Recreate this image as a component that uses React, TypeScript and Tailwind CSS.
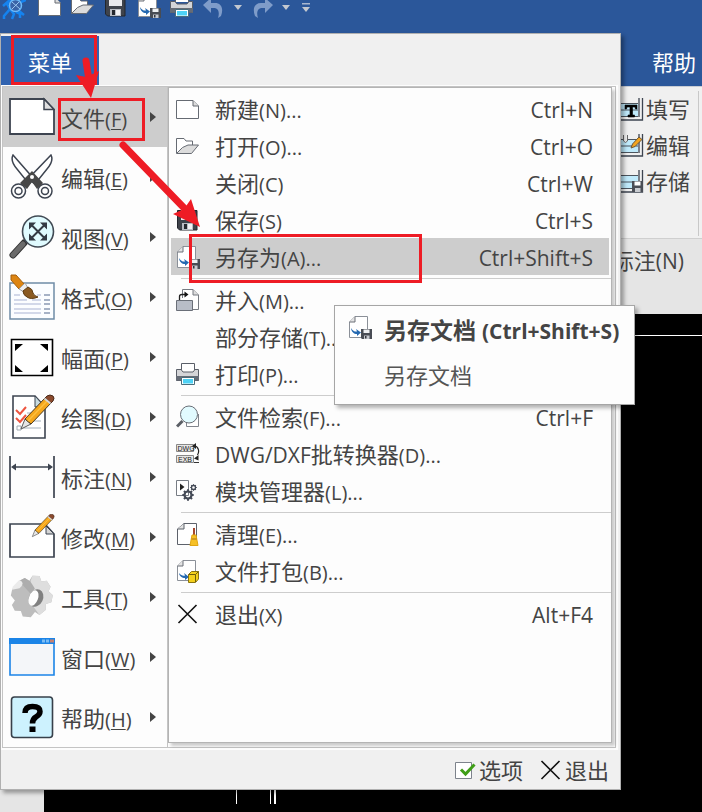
import React from "react";

type IconProps = { className?: string };
type Icon = (p: IconProps) => React.ReactElement;

const INK = "#3d4450";
const FONT = "font-['Open_Sans','Noto_Sans_CJK_SC',sans-serif]";

/* ---------- small icons (24 x 24) ---------- */

const Svg24 = ({ className = "size-6", children }: { className?: string; children: React.ReactNode }) => (
  <svg viewBox="0 0 24 24" className={`shrink-0 ${className}`} fill="none" aria-hidden="true">
    {children}
  </svg>
);

const NewIcon: Icon = (p) => (
  <Svg24 {...p}>
    <path d="M0.5 3.5H17L22.500 9V21.5H0.5Z" fill="#fff" stroke="#666b73" />
    <path d="M17 3.5V9H22.500" fill="#ddd" stroke="#666b73" />
  </Svg24>
);

const OpenIcon: Icon = (p) => (
  <Svg24 {...p}>
    <path d="M0.5 19V4.5H8L10 7H16.5V11" fill="#fff" stroke="#666b73" />
    <path d="M0.5 19.5L6.5 13.5L12 11H22.500L15.500 19.5Z" fill="#dcdcdc" stroke="#666b73" />
  </Svg24>
);

const SaveIcon: Icon = (p) => (
  <Svg24 {...p}>
    <path d="M1.500 2.500H21V22H3.500L1.500 20V2.500Z" fill="#3f434b" stroke="#22262d" />
    <path d="M5 2H18V12H5Z" fill="#e9e9ec" />
    <path d="M6 15H17V22H6Z" fill="#b9bcc3" />
    <path d="M8 16H11V21H8Z" fill="#25282e" />
    <path d="M12 16H16V21H12Z" fill="#f2f2f4" />
  </Svg24>
);

const SaveAsIcon: Icon = (p) => (
  <Svg24 {...p}>
    <path d="M7 1.500H19.500V22.500H1.500V7Z" fill="#fff" stroke="#8b9098" />
    <path d="M7 1.500V7H1.500" fill="#e3e3e3" stroke="#6c7078" />
    <path d="M3 13C5 16 7 17 9 16.500L8 14L13 17.500L9 21V19C6 19 3.500 17 3 13Z" fill="#2468b0" />
    <path d="M13 14H24V24H14L13 23Z" fill="#484c54" />
    <path d="M15.500 14.500H21.500V18H15.500Z" fill="#eef0f2" />
    <path d="M16 20.500H21.500V24H16Z" fill="#c6c9cf" />
    <path d="M17 21H18.500V23.500H17Z" fill="#33363c" />
  </Svg24>
);

const MergeIcon: Icon = (p) => (
  <Svg24 {...p}>
    <path d="M6.500 10V1.500H17L22.500 7V21.500H16" fill="#fff" stroke="#777b82" />
    <path d="M17 1.500V7H22.500" fill="#ddd" stroke="#777b82" />
    <path d="M0.500 12.500H16.500V22.500H0.500Z" fill="#b8bdc7" stroke="#6a6f78" />
    <path d="M3.500 12V8.500Q3.500 6.500 6 6.500H9" stroke="#222" strokeWidth="1.300" />
    <path d="M8.500 3.500L12.500 6.500L8.500 9.500Z" fill="#111" />
  </Svg24>
);

const PrintIcon: Icon = (p) => (
  <Svg24 {...p}>
    <path d="M5.500 8V1.500H18.500V8" fill="#fff" stroke="#5a5f68" />
    <path d="M0.500 7.500H5L7 10H17L19 7.500H22.500V18.500H0.500Z" fill="#d4d5d8" stroke="#5a5f68" />
    <path d="M0 14H23V18.500H0Z" fill="#666c76" />
    <path d="M5.500 15.500H18.500V22.500H5.500Z" fill="#fff" stroke="#4a6d7b" />
    <path d="M7 17H17V21.500H7Z" fill="#4ed2f5" />
  </Svg24>
);

const SearchDocIcon: Icon = (p) => (
  <Svg24 {...p}>
    <path d="M10.500 16V21.500H22.500V9" fill="#fff" stroke="#81858c" />
    <path d="M1 21.500L6.500 16" stroke="#5b5f66" strokeWidth="3" />
    <circle cx="13" cy="9.500" r="8.500" fill="#e2fbff" stroke="#6a6f77" />
  </Svg24>
);

const ConvertIcon: Icon = (p) => (
  <Svg24 {...p}>
    <path d="M0.500 2.500H17.500V9.500H0.500ZM0.500 13.500H17.500V20.500H0.500Z" fill="#e6e6e6" stroke="#888" />
    <text x="1.500" y="8.500" fontSize="7" fontFamily="Liberation Sans, sans-serif" fill="#222">DWG</text>
    <text x="2" y="19.500" fontSize="7" fontFamily="Liberation Sans, sans-serif" fill="#222">EXB</text>
    <path d="M18 3.500C22 4 24 9 21.500 13" stroke="#222" strokeWidth="1.200" />
    <path d="M16 4L20 1V7ZM18 16.500L22.500 13V18.500Z" fill="#222" />
    <path d="M18 20.500H23" stroke="#333" />
  </Svg24>
);

const Cog = ({ cx, cy, r, w }: { cx: number; cy: number; r: number; w: number }) => (
  <g stroke="#454b57" fill="none">
    <circle cx={cx} cy={cy} r={r} strokeWidth={w} />
    {[0, 45, 90, 135, 180, 225, 270, 315].map((a) => (
      <path key={a} d={`M${cx} ${cy - r}V${cy - r - w}`} strokeWidth={w * 0.9} transform={`rotate(${a} ${cx} ${cy})`} />
    ))}
  </g>
);

const ModulesIcon: Icon = (p) => (
  <Svg24 {...p}>
    <path d="M0.500 1.500H12.500V16.500H0.500Z" fill="#fff" stroke="#777c84" />
    <path d="M4 4.500L8.500 8L4 11.500Z" fill="#222" />
    <Cog cx={12} cy={16} r={3.5} w={2.2} />
    <Cog cx={17.500} cy={8.500} r={2} w={1.300} />
  </Svg24>
);

const CleanIcon: Icon = (p) => (
  <Svg24 {...p}>
    <path d="M8 1.500H20.500V22.500H1.500V7Z" fill="#fff" stroke="#5d626b" />
    <path d="M8 1.500V7H1.500" fill="#e3e3e3" stroke="#5d626b" />
    <path d="M18 6V14" stroke="#a5462d" strokeWidth="2" />
    <path d="M16 13H20L22 23.500H14Z" fill="#f6c026" stroke="#e0a512" />
    <path d="M15.500 17H20.500" stroke="#a8731b" />
  </Svg24>
);

const PackIcon: Icon = (p) => (
  <Svg24 {...p}>
    <path d="M7 1.500H19.500V21.500H1.500V7Z" fill="#fff" stroke="#8b9098" />
    <path d="M7 1.500V7H1.500" fill="#e3e3e3" stroke="#6c7078" />
    <path d="M3 14C5 16.500 7 17 9 16.500L8 14L13 18L9 21V19C6 19 3.500 17.500 3 14Z" fill="#2468b0" />
    <path d="M12.500 15.500L15.500 12.500H22.500V20L19.500 23.500H12.500Z" fill="#f4d01b" stroke="#8a7410" />
    <path d="M12.500 15.500H19.500L22.500 12.500M19.500 15.500V23" stroke="#6e5c0a" />
  </Svg24>
);

const CloseIcon: Icon = (p) => (
  <Svg24 {...p}>
    <path d="M2.500 3L20.500 21M20.500 3L2.500 21" stroke="#111" strokeWidth="1.600" />
  </Svg24>
);

const OptionsIcon: Icon = (p) => (
  <Svg24 {...p}>
    <path d="M2.500 4.500H18.500V20.500H2.500Z" fill="#fff" stroke="#7d838c" />
    <path d="M8 11.500L12.500 16L21.500 6.500" stroke="#3f9e17" strokeWidth="3" />
  </Svg24>
);

/* ---------- large icons (46 x 46) ---------- */

const Svg46 = ({ children }: { children: React.ReactNode }) => (
  <svg viewBox="0 0 46 46" className="size-[46px] shrink-0" fill="none" aria-hidden="true">
    {children}
  </svg>
);

const Pencil = () => (
  <g>
    <path d="M-1 1L3 -9L9 -4Z" fill="#e6e6e6" stroke="#5a5a5a" />
    <path d="M3 -9L23 -30L29 -25L9 -4Z" fill="#f6a71c" stroke="#4a3a22" />
    <path d="M6 -7L26 -28" stroke="#fdc03f" strokeWidth="1.500" />
    <path d="M25 -32Q28 -34 31 -32Q33 -30 31 -27L29 -25L23 -30Z" fill="#8b4a2d" stroke="#4a2a1a" />
    <path d="M22.500 -29.500L28.500 -24.500" stroke="#d5d5d5" strokeWidth="2" />
  </g>
);

const FileBig: Icon = () => (
  <Svg46>
    <path d="M1 5H35L45 15.500V40H1Z" fill="#fff" stroke={INK} strokeWidth="1.800" />
    <path d="M35 5V15.500H45Z" fill="#e0e0e0" stroke={INK} strokeWidth="1.500" />
  </Svg46>
);

const EditBig: Icon = () => (
  <Svg46>
    <g stroke={INK} strokeWidth="1.500">
      <path d="M4 1Q1 7 8 15L20 30L25 25Z" fill="#fff" />
      <path d="M42 1Q45 7 38 15L26 30L19 25Z" fill="#fff" />
      <circle cx="9.500" cy="37" r="7" fill="#fff" />
      <circle cx="36" cy="37" r="7" fill="#fff" />
      <circle cx="9.500" cy="37" r="3.500" fill="#fff" />
      <circle cx="36" cy="37" r="3.500" fill="#fff" />
    </g>
    <path d="M23 17L34 29L28 35L23 28L18 35L11 29Z" fill="#474747" />
    <circle cx="23" cy="23" r="2" fill="#fff" />
  </Svg46>
);

const ViewBig: Icon = () => (
  <Svg46>
    <path d="M4 41L15 29" stroke="#333" strokeWidth="7" strokeLinecap="round" />
    <path d="M4 41L14 30" stroke="#6b6b6b" strokeWidth="5" strokeLinecap="round" />
    <circle cx="29" cy="17.500" r="15.500" fill="#e0fbff" stroke="#414a54" strokeWidth="1.600" />
    <path d="M23 11.500L35 23.500M35 11.500L23 23.500" stroke="#333a44" strokeWidth="2" />
    <path d="M20 8.500H27L20 15.500ZM38 8.500H31L38 15.500ZM20 26.500H27L20 19.500ZM38 26.500H31L38 19.500Z" fill="#333a44" />
  </Svg46>
);

const FormatBig: Icon = () => (
  <Svg46>
    <path d="M1 9H45V45H1Z" fill="#fbfdff" stroke="#6f8ca6" strokeWidth="1.500" />
    <path d="M5 21H11M28 21H32M5 26H18M23 26H32M5 30H32M5 35H32M5 39H32" stroke="#aab3d4" strokeWidth="1.200" />
    <path d="M35 21H41M35 26H41M35 30H41M35 35H41M35 39H41" stroke="#52688e" strokeWidth="1.200" />
    <path d="M2 1L7 1L16 11L10 15L2 6Z" fill="#dd8512" stroke="#a35f0c" />
    <path d="M10 15L16 9L19 14L15 18Z" fill="#eee" stroke="#a5a5a5" />
    <path d="M14 17L19 13Q24 15 24 19Q25 22 29 23Q22 26 18 23Q14 21 14 17Z" fill="#8a5a22" stroke="#5e3c13" />
  </Svg46>
);

const FrameBig: Icon = () => (
  <Svg46>
    <path d="M2.500 5.500H43.500V41.500H2.500Z" fill="#fff" stroke="#000" strokeWidth="1.600" />
    <path d="M6 10H14L6 17ZM39 10H31L39 17ZM6 38H14L6 31ZM39 38H31L39 31Z" fill="#000" />
  </Svg46>
);

const DrawBig: Icon = () => (
  <Svg46>
    <path d="M4 2H26L36 13V44H4Z" fill="#fff" stroke={INK} strokeWidth="1.600" />
    <path d="M26 2V13H36Z" fill="#c8dbe0" stroke={INK} />
    <path d="M18 19H32M18 27H32M12 34H32" stroke="#c3cbd2" strokeWidth="1.500" />
    <path d="M7 16L11 20L17 13M7 24L11 28L17 21" stroke="#ee5540" strokeWidth="2" />
    <path d="M8 32H12V36H8Z" stroke="#a0a9b1" />
    <g transform="translate(13 34)"><Pencil /></g>
  </Svg46>
);

const DimensionBig: Icon = () => (
  <Svg46>
    <path d="M1 2V44M45 2V44M5 13H41" stroke={INK} strokeWidth="1.700" />
    <path d="M2 13L7 9.500V16.500ZM44 13L39 9.500V16.500Z" fill={INK} />
  </Svg46>
);

const ModifyBig: Icon = () => (
  <Svg46>
    <path d="M1 10H36L45 20V43H1Z" fill="#fff" stroke={INK} strokeWidth="1.700" />
    <path d="M37 12V20H45Z" fill="#d5d5d5" stroke={INK} />
    <g transform="translate(24 22) scale(.66)"><Pencil /></g>
  </Svg46>
);

const ToolsBig: Icon = () => (
  <Svg46>
    <g transform="rotate(12 23 23)">
      <path d="M19 2L26 1L29 6L34 4L39 9L38 14L43 17V24L38 27L39 33L34 39L29 37L26 43L18 44L15 39L9 40L5 35L7 30L2 26V19L7 16V10L12 6L17 8Z" fill="#bdbdbd" />
      <path d="M19 2L26 1L29 6L34 4L39 9L38 14L43 17V24L38 27L39 33L34 39L24 30L18 10Z" fill="#dedede" />
      <path d="M18 8L12 6L7 10L22 21L24 14Z" fill="#adadad" />
      <path d="M7 9Q14 10 9 17L2 20V17Z" fill="#ebebeb" />
    </g>
    <ellipse cx="27" cy="24" rx="7" ry="9" fill="#808080" transform="rotate(25 27 24)" />
    <ellipse cx="24.500" cy="24" rx="4.500" ry="8" fill="#fdfdfd" transform="rotate(20 24.500 24)" />
  </Svg46>
);

const WindowBig: Icon = () => (
  <Svg46>
    <path d="M1 5H45V41H1Z" fill="#f4f6f9" stroke="#1b84e7" strokeWidth="1.600" />
    <path d="M0 4H46V10H0Z" fill="#1b84e7" />
    <path d="M33 5.500H36V8.500H33ZM37 5.500H40V8.500H37Z" fill="#7bbcf4" />
    <path d="M41 5.500H45V8.500H41Z" fill="#c58172" />
  </Svg46>
);

const HelpBig: Icon = () => (
  <Svg46>
    <rect x="2.500" y="3" width="41" height="40.500" rx="3" fill="#cdf2fe" stroke="#37404a" strokeWidth="1.600" />
    <path d="M16 19Q16 12.500 23.500 12.500Q31 12.500 31 17.500Q31 20.500 27 23Q23.500 25 23.500 29.500" stroke="#000" strokeWidth="5.500" />
    <path d="M20.500 32.500H26.500V38H20.500Z" fill="#000" />
  </Svg46>
);

/* ---------- ribbon icons ---------- */

const TableBase = () => (
  <>
    <path d="M0 6H18V20H0Z" fill="#bfeafb" />
    <path d="M0 6.500H18M0 13H18M0 19.500H18" stroke="#4d555e" />
    <path d="M19 1V20M22.500 1V23H0" stroke="#3d4450" strokeWidth="1.300" />
  </>
);
const FillIcon: Icon = (p) => (
  <Svg24 {...p}>
    <TableBase />
    <path d="M5 8H17V12H15.500L15 10H12.500V18H14.500V20H8V18H10V10H7L6.500 12H5Z" fill="#000" stroke="#000" strokeWidth=".6" />
  </Svg24>
);
const EditTableIcon: Icon = (p) => (
  <Svg24 {...p}>
    <TableBase />
    <path d="M3.500 2V8Q5.500 11 7.500 8V2" stroke="#666" fill="#eee" />
    <path d="M11 15L12.500 11L19 4L22 6.500L15 13.500Z" fill="#f2a51f" stroke="#6b5638" />
  </Svg24>
);
const StoreIcon: Icon = (p) => (
  <Svg24 {...p}>
    <TableBase />
    <path d="M12 12H23V23H12Z" fill="#4a4e56" />
    <path d="M14.500 12.500H20.500V16.500H14.500Z" fill="#fff" />
    <path d="M15 19H20.500V23H15Z" fill="#c8cbd0" />
  </Svg24>
);

const LogoIcon: Icon = () => (
  <svg viewBox="0 0 24 24" className="size-6 shrink-0" fill="none" aria-hidden="true">
    <path d="M11 1L5 8L8 13L2 20V23M8 13L12 18L10 23M14 16L18 18V22M9 3L1 10M19 6L24 4M17 15L22 19" stroke="#1583ef" strokeWidth="2.500" />
    <circle cx="13.500" cy="9.500" r="6" fill="#3a64a8" stroke="#6bb9fa" strokeWidth="1.500" />
    <path d="M10 6L18 13M17 6L10 13" stroke="#9cc7f0" />
  </svg>
);

const UndoIcon: Icon = ({ className }) => (
  <Svg24 className={className}>
    <path d="M1 10L9 3V8H13C19 8 22 13 19 21L16 23C18 17 16 13 12 13H9V18Z" fill="#7f9cc9" />
  </Svg24>
);

/* ---------- data ---------- */

type Entry = { icon?: Icon; zh: string; key: string; dots?: boolean; shortcut?: string; active?: boolean; prefix?: string };

const mainMenu: { icon: Icon; zh: string; key: string }[] = [
  { icon: FileBig, zh: "文件", key: "F" },
  { icon: EditBig, zh: "编辑", key: "E" },
  { icon: ViewBig, zh: "视图", key: "V" },
  { icon: FormatBig, zh: "格式", key: "O" },
  { icon: FrameBig, zh: "幅面", key: "P" },
  { icon: DrawBig, zh: "绘图", key: "D" },
  { icon: DimensionBig, zh: "标注", key: "N" },
  { icon: ModifyBig, zh: "修改", key: "M" },
  { icon: ToolsBig, zh: "工具", key: "T" },
  { icon: WindowBig, zh: "窗口", key: "W" },
  { icon: HelpBig, zh: "帮助", key: "H" },
];

const fileMenu: Entry[][] = [
  [
    { icon: NewIcon, zh: "新建", key: "N", dots: true, shortcut: "Ctrl+N" },
    { icon: OpenIcon, zh: "打开", key: "O", dots: true, shortcut: "Ctrl+O" },
    { zh: "关闭", key: "C", shortcut: "Ctrl+W" },
    { icon: SaveIcon, zh: "保存", key: "S", shortcut: "Ctrl+S" },
    { icon: SaveAsIcon, zh: "另存为", key: "A", dots: true, shortcut: "Ctrl+Shift+S", active: true },
  ],
  [
    { icon: MergeIcon, zh: "并入", key: "M", dots: true },
    { zh: "部分存储", key: "T", dots: true },
    { icon: PrintIcon, zh: "打印", key: "P", dots: true },
  ],
  [
    { icon: SearchDocIcon, zh: "文件检索", key: "F", dots: true, shortcut: "Ctrl+F" },
    { icon: ConvertIcon, prefix: "DWG/DXF", zh: "批转换器", key: "D", dots: true },
    { icon: ModulesIcon, zh: "模块管理器", key: "L", dots: true },
  ],
  [
    { icon: CleanIcon, zh: "清理", key: "E", dots: true },
    { icon: PackIcon, zh: "文件打包", key: "B", dots: true },
  ],
  [{ icon: CloseIcon, zh: "退出", key: "X", shortcut: "Alt+F4" }],
];

const Caret = ({ bar = false }: { bar?: boolean }) => (
  <svg viewBox="0 0 8 10" className="h-[10px] w-2 shrink-0" aria-hidden="true">
    {bar && <path d="M0 0H8V1.500H0Z" fill="#a9b7cf" />}
    <path d={bar ? "M0 4H8L4 9Z" : "M0 3H8L4 8Z"} fill="#c3c8d0" />
  </svg>
);

const quick = "flex h-6 items-center";

export default function App() {
  return (
    <div className={`relative flex min-h-screen flex-col overflow-hidden bg-[#e5e5e5] text-[22px] leading-[30px] text-[#444] ${FONT}`}>
      <header className="bg-[#2b579a]">
        <div className="flex h-[34px] items-start overflow-hidden">
          <div className="-mt-1 ml-[2px] flex">
            <button aria-label="主页" className={quick}><LogoIcon /></button>
          </div>
          <div className="-mt-[6px] ml-3 flex gap-[9px]">
            <button aria-label="新建" className={quick}><NewIcon /></button>
            <button aria-label="打开" className={quick}><OpenIcon /></button>
            <button aria-label="保存" className={quick}><SaveIcon /></button>
            <button aria-label="另存为" className={quick}><SaveAsIcon /></button>
            <button aria-label="打印" className={quick}><PrintIcon /></button>
          </div>
          <div className="-mt-[5px] ml-2 flex gap-2">
            <button aria-label="撤销" className={quick}><UndoIcon /></button>
            <button aria-label="撤销列表" className={quick}><Caret /></button>
            <button aria-label="重做" className={quick}><UndoIcon className="size-6 -scale-x-100" /></button>
            <button aria-label="重做列表" className={quick}><Caret /></button>
            <button aria-label="自定义" className={`${quick} ml-1 pt-[2px]`}><Caret bar /></button>
          </div>
        </div>
        <nav className="flex h-[52px] items-center justify-end px-[6px] pt-1">
          <button className="text-white">帮助</button>
        </nav>
      </header>

      <section className="border-t border-[#c9cdd4] bg-[#f0f0f0] pt-1">
        <div className="flex h-[147px] justify-end">
          <div className="flex h-[145px] flex-col border-r border-[#c8c8c8] pr-2">
            {[
              { icon: FillIcon, t: "填写" },
              { icon: EditTableIcon, t: "编辑" },
              { icon: StoreIcon, t: "存储" },
            ].map(({ icon: I, t }) => (
              <button key={t} className="flex h-9 items-center gap-[2px]">
                <I />
                {t}
              </button>
            ))}
          </div>
          <div className="w-[3px]" />
        </div>
        <div className="flex h-[76px] justify-end border-t border-[#cfcfcf] bg-[#e5e5e5] pr-[18px] pt-[6px]">
          <span>标注<span className="text-[21px]">(N)</span></span>
        </div>
      </section>

      <main className="ml-11 flex-1 bg-black">
        <svg className="block h-[490px] w-full" aria-hidden="true">
          <path d="M0 21.500H4000M192.500 22V2000M226.500 22V2000" stroke="#fff" />
          <path d="M231 22V2000" stroke="#fff" strokeWidth="2" />
        </svg>
      </main>

      {/* application menu */}
      <div className="absolute left-0 top-[33px] w-[621px] border border-[#b0b0b0] bg-[#f0f0f0] shadow-[3px_3px_4px_rgba(0,0,0,0.35)]">
        <div className="flex h-[51px] items-stretch pt-[2px]">
          <button className="w-[98px] bg-[#3163b0] pt-[2px] text-white">菜单</button>
        </div>
        <div className="mr-[2px] flex border-2 border-l border-t border-[#fdfdfd] bg-[#fdfdfd]">
          <div role="menu" className="w-[166px] shrink-0 border border-[#c4c4c4]">
            {mainMenu.map(({ icon: I, zh, key }, i) => (
              <button
                key={key}
                role="menuitem"
                className={`flex h-[60px] w-full items-center pl-[6px] ${i === 0 ? "bg-[#cdcdcd]" : ""}`}
              >
                <I />
                <span className="ml-[6px] flex-1 whitespace-nowrap pt-1 text-left">
                  {zh}
                  <span className="text-[20px]">(<span className="underline decoration-1 underline-offset-2">{key}</span>)</span>
                </span>
                <svg viewBox="0 0 6 10" className="mr-[11px] h-[10px] w-[6px]" aria-hidden="true">
                  <path d="M0 0L6 5L0 10Z" fill="#444" />
                </svg>
              </button>
            ))}
          </div>
          <div className="flex-1 border-y border-r border-[#c4c4c4] pr-[3px]">
            <div role="menu" className="h-[656px] border border-[#b4b4b4] bg-[#fdfdfd] p-[2px] shadow-[3px_3px_3px_rgba(0,0,0,0.2)]">
              {fileMenu.map((group, g) => (
                <React.Fragment key={g}>
                  {g > 0 && <div className="-mr-[2px] ml-[10px] flex h-[6px] items-center"><hr className="w-full border-[#cdcdcd]" /></div>}
                  {group.map(({ icon: I, prefix, zh, key, dots, shortcut, active }) => (
                    <button
                      key={zh}
                      role="menuitem"
                      className={`flex h-[37px] w-full items-center whitespace-nowrap pl-[5px] pr-4 ${active ? "bg-[#cdcdcd]" : ""}`}
                    >
                      <span className="w-6">{I && <I />}</span>
                      <span className="ml-[15px] flex-1 pt-[2px] text-left">
                        {prefix && <span className="text-[21px]">{prefix}</span>}
                        {zh}
                        <span className="text-[20px]">({key}){dots && "..."}</span>
                      </span>
                      {shortcut && <span className="pt-[2px] text-[21px]">{shortcut}</span>}
                    </button>
                  ))}
                </React.Fragment>
              ))}
            </div>
          </div>
        </div>
        <div className="flex h-[39px] items-center justify-end gap-4 pr-[11px]">
          <button className="flex items-center gap-[2px]"><OptionsIcon />选项</button>
          <button className="flex items-center gap-[2px]"><CloseIcon />退出</button>
        </div>
      </div>

      {/* tooltip */}
      <div role="tooltip" className="absolute left-[334px] top-[305px] flex h-[100px] w-[301px] gap-3 whitespace-nowrap border border-[#a6a6a6] bg-[#fdfdfd] pl-[13px] pt-[9px] shadow-[3px_3px_4px_rgba(0,0,0,0.3)]">
        <SaveAsIcon />
        <div>
          <div className="text-[23px] font-bold">另存文档 <span className="text-[21px]">(Ctrl+Shift+S)</span></div>
          <div className="pt-[14px] text-[#555]">另存文档</div>
        </div>
      </div>

      {/* highlight marks */}
      <div className="pointer-events-none absolute left-[11px] top-[35px] h-[50px] w-[86px] border-3 border-[#ee1c25]" />
      <div className="pointer-events-none absolute left-[58px] top-[98px] h-[43px] w-[87px] border-3 border-[#ee1c25]" />
      <div className="pointer-events-none absolute left-[189px] top-[234px] h-[49px] w-[233px] border-3 border-[#ee1c25]" />
      <svg className="pointer-events-none absolute left-0 top-0 h-[240px] w-[220px]" aria-hidden="true">
        <path d="M86 61L89 80M123 145L187 211" stroke="#ee1c25" strokeWidth="7" strokeLinecap="round" />
        <path d="M91 98L76 75L86 77L99 71ZM200 227L173 214L184 209L191 199Z" fill="#ee1c25" />
      </svg>
    </div>
  );
}
